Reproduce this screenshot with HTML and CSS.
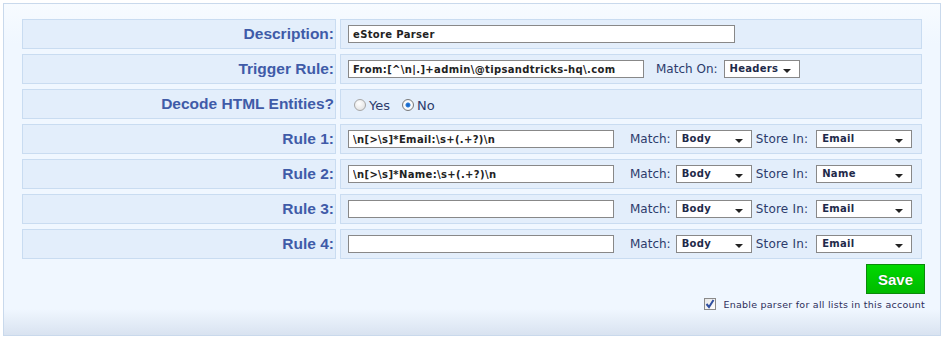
FILE: index.html
```html
<!DOCTYPE html>
<html lang="en">
<head>
    <meta charset="UTF-8">
    <title>Parser settings</title>
    <link rel="stylesheet" href="styles.css">
</head>
<body>

    <div class="panel">
        <div class="form-grid">
            <div class="label-cell">Description:</div>
            <div class="value-cell">
                <input type="text" class="field w-desc" value="eStore Parser">
            </div>

            <div class="label-cell">Trigger Rule:</div>
            <div class="value-cell">
                <input type="text" class="field w-trigger" value="From:[^\n|.]+admin\@tipsandtricks-hq\.com">
                <span class="caption cap-on">Match On:</span>
                <div class="select w-small">Headers</div>
            </div>

            <div class="label-cell">Decode HTML Entities?</div>
            <div class="value-cell">
                <label class="radio"><input type="radio" name="decode"> Yes</label>
                <label class="radio"><input type="radio" name="decode" checked> No</label>
            </div>

            <div class="label-cell">Rule 1:</div>
            <div class="value-cell">
                <input type="text" class="field w-rule" value="\n[>\s]*Email:\s+(.+?)\n">
                <span class="caption cap-match">Match:</span>
                <div class="select w-small">Body</div>
                <span class="caption cap-store">Store In:</span>
                <div class="select w-big">Email</div>
            </div>

            <div class="label-cell">Rule 2:</div>
            <div class="value-cell">
                <input type="text" class="field w-rule" value="\n[>\s]*Name:\s+(.+?)\n">
                <span class="caption cap-match">Match:</span>
                <div class="select w-small">Body</div>
                <span class="caption cap-store">Store In:</span>
                <div class="select w-big">Name</div>
            </div>

            <div class="label-cell">Rule 3:</div>
            <div class="value-cell">
                <input type="text" class="field w-rule" value="">
                <span class="caption cap-match">Match:</span>
                <div class="select w-small">Body</div>
                <span class="caption cap-store">Store In:</span>
                <div class="select w-big">Email</div>
            </div>

            <div class="label-cell">Rule 4:</div>
            <div class="value-cell">
                <input type="text" class="field w-rule" value="">
                <span class="caption cap-match">Match:</span>
                <div class="select w-small">Body</div>
                <span class="caption cap-store">Store In:</span>
                <div class="select w-big">Email</div>
            </div>
        </div>

        <div class="actions">
            <button class="save-btn">Save</button>
            <label class="enable">
                <span class="check-box">
                    <svg width="10" height="10" viewBox="0 0 10 10"><path d="M1.5 5 L4 8 L8.5 1" fill="none" stroke="#2f4f9f" stroke-width="2"/></svg>
                </span>
                Enable parser for all lists in this account
            </label>
        </div>
    </div>

</body>
</html>
```

FILE: styles.css
```css
/* ОСНОВА */
* { margin: 0; padding: 0; box-sizing: border-box; }
body { background: #ffffff; font-family: 'DejaVu Sans', Verdana, sans-serif; }

/* ПАНЕЛЬ */
.panel {
    margin: 3px 5px 0 3px;
    height: 333px;
    border: 1px solid #c9d9ec;
    background: linear-gradient(to bottom, #f7fbff 0px, #f0f7ff 40px, #f0f7ff 305px, #d8e2f0 332px);
    padding: 15px 18px 0 18px;
}

/* СЕТКА ФОРМЫ */
.form-grid {
    display: grid;
    grid-template-columns: 314px 1fr;
    grid-auto-rows: 30px;
    gap: 5px 4px;
}

.label-cell, .value-cell {
    background: #e3eefb;
    border: 1px solid #c9dcf1;
    display: flex;
    align-items: center;
}

.label-cell {
    justify-content: flex-end;
    padding-right: 1px;
    font-family: 'Liberation Sans', Arial, sans-serif;
    font-weight: bold;
    font-size: 15.5px;
    color: #3f5ba8;
}

.value-cell { padding-left: 7px; }

/* ПОЛЯ */
.field {
    height: 18px;
    border: 1px solid #888888;
    background: #fff;
    padding: 0 4px;
    font-family: 'DejaVu Sans', sans-serif;
    font-weight: bold;
    font-size: 10px;
    letter-spacing: 0.35px;
    color: #222;
    outline: none;
}

.w-desc { width: 387px; }
.w-trigger { width: 296px; }
.w-rule { width: 266px; }

.caption { font-size: 12px; color: #2c3b6b; }
.cap-on { margin-left: 12px; margin-right: 6px; }
.cap-match { margin-left: 16px; margin-right: 5px; }
.cap-store { margin-left: 4px; margin-right: 8px; letter-spacing: 0.2px; }

.select {
    position: relative;
    height: 18px;
    border: 1px solid #888888;
    background: #fff;
    padding-left: 5px;
    font-size: 10px;
    font-weight: bold;
    letter-spacing: 0.3px;
    line-height: 16px;
    color: #1e2a4a;
}
.select::after {
    content: "";
    position: absolute;
    right: 8px;
    top: 8px;
    border-left: 4px solid transparent;
    border-right: 4px solid transparent;
    border-top: 4px solid #222;
}
.w-small { width: 76px; }
.w-big { width: 96px; }

/* РАДИО */
.radio {
    display: flex;
    align-items: center;
    font-size: 13px;
    color: #2c3b6b;
    margin-left: 6px;
    margin-right: 6px;
    padding-top: 2px;
}
.radio input {
    appearance: none;
    width: 12px;
    height: 12px;
    border-radius: 50%;
    border: 1px solid #a6a6a6;
    background: radial-gradient(circle at 40% 35%, #ffffff, #dcdcdc);
    margin-right: 3px;
}
.radio input:checked {
    background: radial-gradient(circle, #0a5bc4 0, #2f7fd8 2px, #ffffff 3px, #e4e4e4 100%);
    border-color: #7a7a7a;
}

/* ДЕЙСТВИЯ */
.actions {
    display: flex;
    flex-direction: column;
    align-items: flex-end;
    margin-right: -3px;
    margin-top: 5px;
}

.save-btn {
    width: 59px;
    height: 30px;
    border: 1px solid #0b8a0b;
    background: linear-gradient(to bottom, #00d800, #00bb00);
    color: #fff;
    font-family: 'Liberation Sans', Arial, sans-serif;
    font-weight: bold;
    font-size: 15px;
    text-shadow: 0 0 1px #0a6a0a;
    cursor: pointer;
}

.enable {
    display: flex;
    align-items: center;
    margin-top: 4px;
    font-size: 9.5px;
    letter-spacing: 0.25px;
    color: #2d2d5a;
}

.check-box {
    width: 12px;
    height: 12px;
    border: 1px solid #8a8a8a;
    background: linear-gradient(to bottom right, #e6e6e6, #ffffff);
    display: flex;
    align-items: center;
    justify-content: center;
    margin-right: 7px;
}
```
